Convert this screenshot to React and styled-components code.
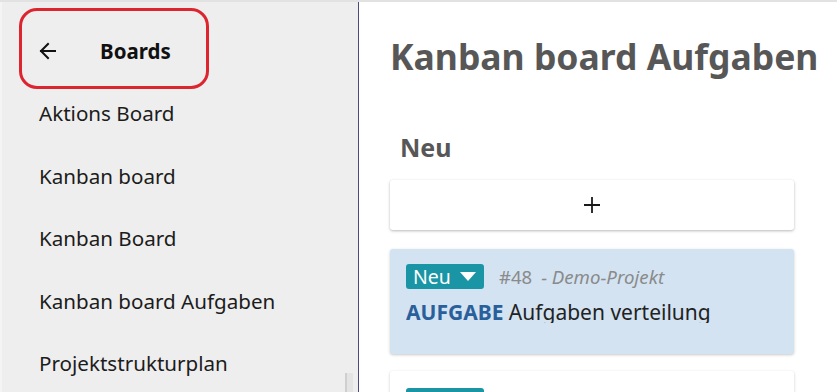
import React from "react";
import styled, { createGlobalStyle } from "styled-components";

const Global = createGlobalStyle`
  html, body { margin: 0; padding: 0; background: #ffffff; }
  body { font-family: "Noto Sans", "Open Sans", sans-serif; overflow: hidden; }
  * { box-sizing: border-box; }
`;

const Page = styled.div`
  width: 837px;
  height: 392px;
  display: flex;
  border-top: 2px solid #e2e2e2;
  overflow: hidden;
`;

const Sidebar = styled.aside`
  position: relative;
  width: 359px;
  flex: none;
  background: #eeeeee;
  border-right: 1px solid #4a4a7c;
  border-left: 2px solid #f4f4f4;
  padding-top: 6px;
`;

const BackBox = styled.div`
  margin-left: 17px;
  width: 190px;
  height: 81px;
  border: 3px solid #dd2530;
  border-radius: 18px;
  display: flex;
  align-items: center;
  padding: 5px 0 0 17px;
`;

const BackArrow = styled.svg`
  width: 18px;
  height: 18px;
  flex: none;
`;

const BackTitle = styled.span`
  margin-left: 43px;
  font-weight: 700;
  font-size: 20.5px;
  color: #111;
`;

const List = styled.ul`
  list-style: none;
  margin: -1px 0 0;
  padding: 0;
  display: flex;
  flex-direction: column;
  gap: 12.5px;
`;

const Item = styled.li`
  height: 50px;
  display: flex;
  align-items: center;
  padding-left: 37px;
  font-size: 20.6px;
  color: #1c1c1c;
  white-space: nowrap;
`;

const ScrollThumb = styled.div`
  position: absolute;
  left: 343px;
  top: 371px;
  width: 8px;
  height: 30px;
  background: #e4e4e4;
  border-left: 2px solid #cfcfcf;
`;

const Main = styled.main`
  flex: 1;
  padding: 30px 0 0 31px;
  background: #fff;
`;

const Title = styled.h1`
  margin: 0;
  font-size: 35.5px;
  line-height: 48px;
  font-weight: 700;
  color: #575757;
  white-space: nowrap;
`;

const Column = styled.section`
  width: 404px;
  margin-top: 50px;
  display: flex;
  flex-direction: column;
`;

const ColumnTitle = styled.h2`
  margin: 0 0 0 10px;
  font-size: 25px;
  line-height: 34px;
  font-weight: 700;
  color: #575757;
`;

const AddCard = styled.button`
  margin-top: 16px;
  height: 50px;
  width: 100%;
  background: #fff;
  border: none;
  border-radius: 3px;
  box-shadow: 0 1px 3px rgba(0, 0, 0, 0.28);
  display: flex;
  align-items: center;
  justify-content: center;
  padding: 0;
`;

const Card = styled.div`
  margin-top: ${(p) => p.$gap}px;
  height: 105px;
  flex: none;
  border-radius: 3px;
  background: ${(p) => p.$bg};
  box-shadow: 0 1px 3px rgba(0, 0, 0, 0.22);
  padding: ${(p) => p.$top}px 16px 0;
`;

const Meta = styled.div`
  display: flex;
  align-items: center;
  height: 25px;
`;

const Badge = styled.span`
  display: inline-flex;
  align-items: center;
  gap: 9px;
  height: 25px;
  width: 78px;
  padding-left: 7px;
  border-radius: 3px;
  background: #1a95a6;
  color: #fff;
  font-size: 19.5px;
  line-height: 25px;
`;

const Caret = styled.svg`
  width: 16px;
  height: 9px;
`;

const Number = styled.span`
  margin-left: 15px;
  font-size: 18.5px;
  color: #8a8a8a;
`;

const Project = styled.span`
  margin-left: 9px;
  font-size: 18.7px;
  font-style: italic;
  color: #8a8a8a;
`;

const TaskLine = styled.div`
  margin-top: 8px;
  height: 26px;
  overflow: hidden;
  font-size: 21px;
  line-height: 31px;
  color: #222;
  white-space: nowrap;
`;

const Kind = styled.span`
  font-weight: 700;
  color: #29609a;
`;

export default function App() {
  const boards = [
    "Aktions Board",
    "Kanban board",
    "Kanban Board",
    "Kanban board Aufgaben",
    "Projektstrukturplan",
  ];
  return (
    <>
      <Global />
      <Page>
        <Sidebar>
          <BackBox>
            <BackArrow viewBox="0 0 18 18" fill="none" stroke="#111" strokeWidth="2" strokeLinecap="square">
              <path d="M2 9 H16" />
              <path d="M9 2 L2 9 L9 16" strokeLinejoin="miter" />
            </BackArrow>
            <BackTitle>Boards</BackTitle>
          </BackBox>
          <List>
            {boards.map((b) => (
              <Item key={b}>{b}</Item>
            ))}
          </List>
          <ScrollThumb />
        </Sidebar>
        <Main>
          <Title>Kanban board Aufgaben</Title>
          <Column>
            <ColumnTitle>Neu</ColumnTitle>
            <AddCard aria-label="Hinzufügen">
              <svg width="18" height="18" viewBox="0 0 18 18" stroke="#1a1a1a" strokeWidth="1.8">
                <path d="M9 1 V17 M1 9 H17" />
              </svg>
            </AddCard>
            <Card $bg="#d3e3f2" $gap={19} $top={15}>
              <Meta>
                <Badge>
                  Neu
                  <Caret viewBox="0 0 16 9">
                    <path d="M0 0 H16 L8 9 Z" fill="#fff" />
                  </Caret>
                </Badge>
                <Number>#48</Number>
                <Project>- Demo-Projekt</Project>
              </Meta>
              <TaskLine>
                <Kind>AUFGABE</Kind> Aufgaben verteilung
              </TaskLine>
            </Card>
            <Card $bg="#ffffff" $gap={17} $top={17}>
              <Meta>
                <Badge />
              </Meta>
            </Card>
          </Column>
        </Main>
      </Page>
    </>
  );
}
